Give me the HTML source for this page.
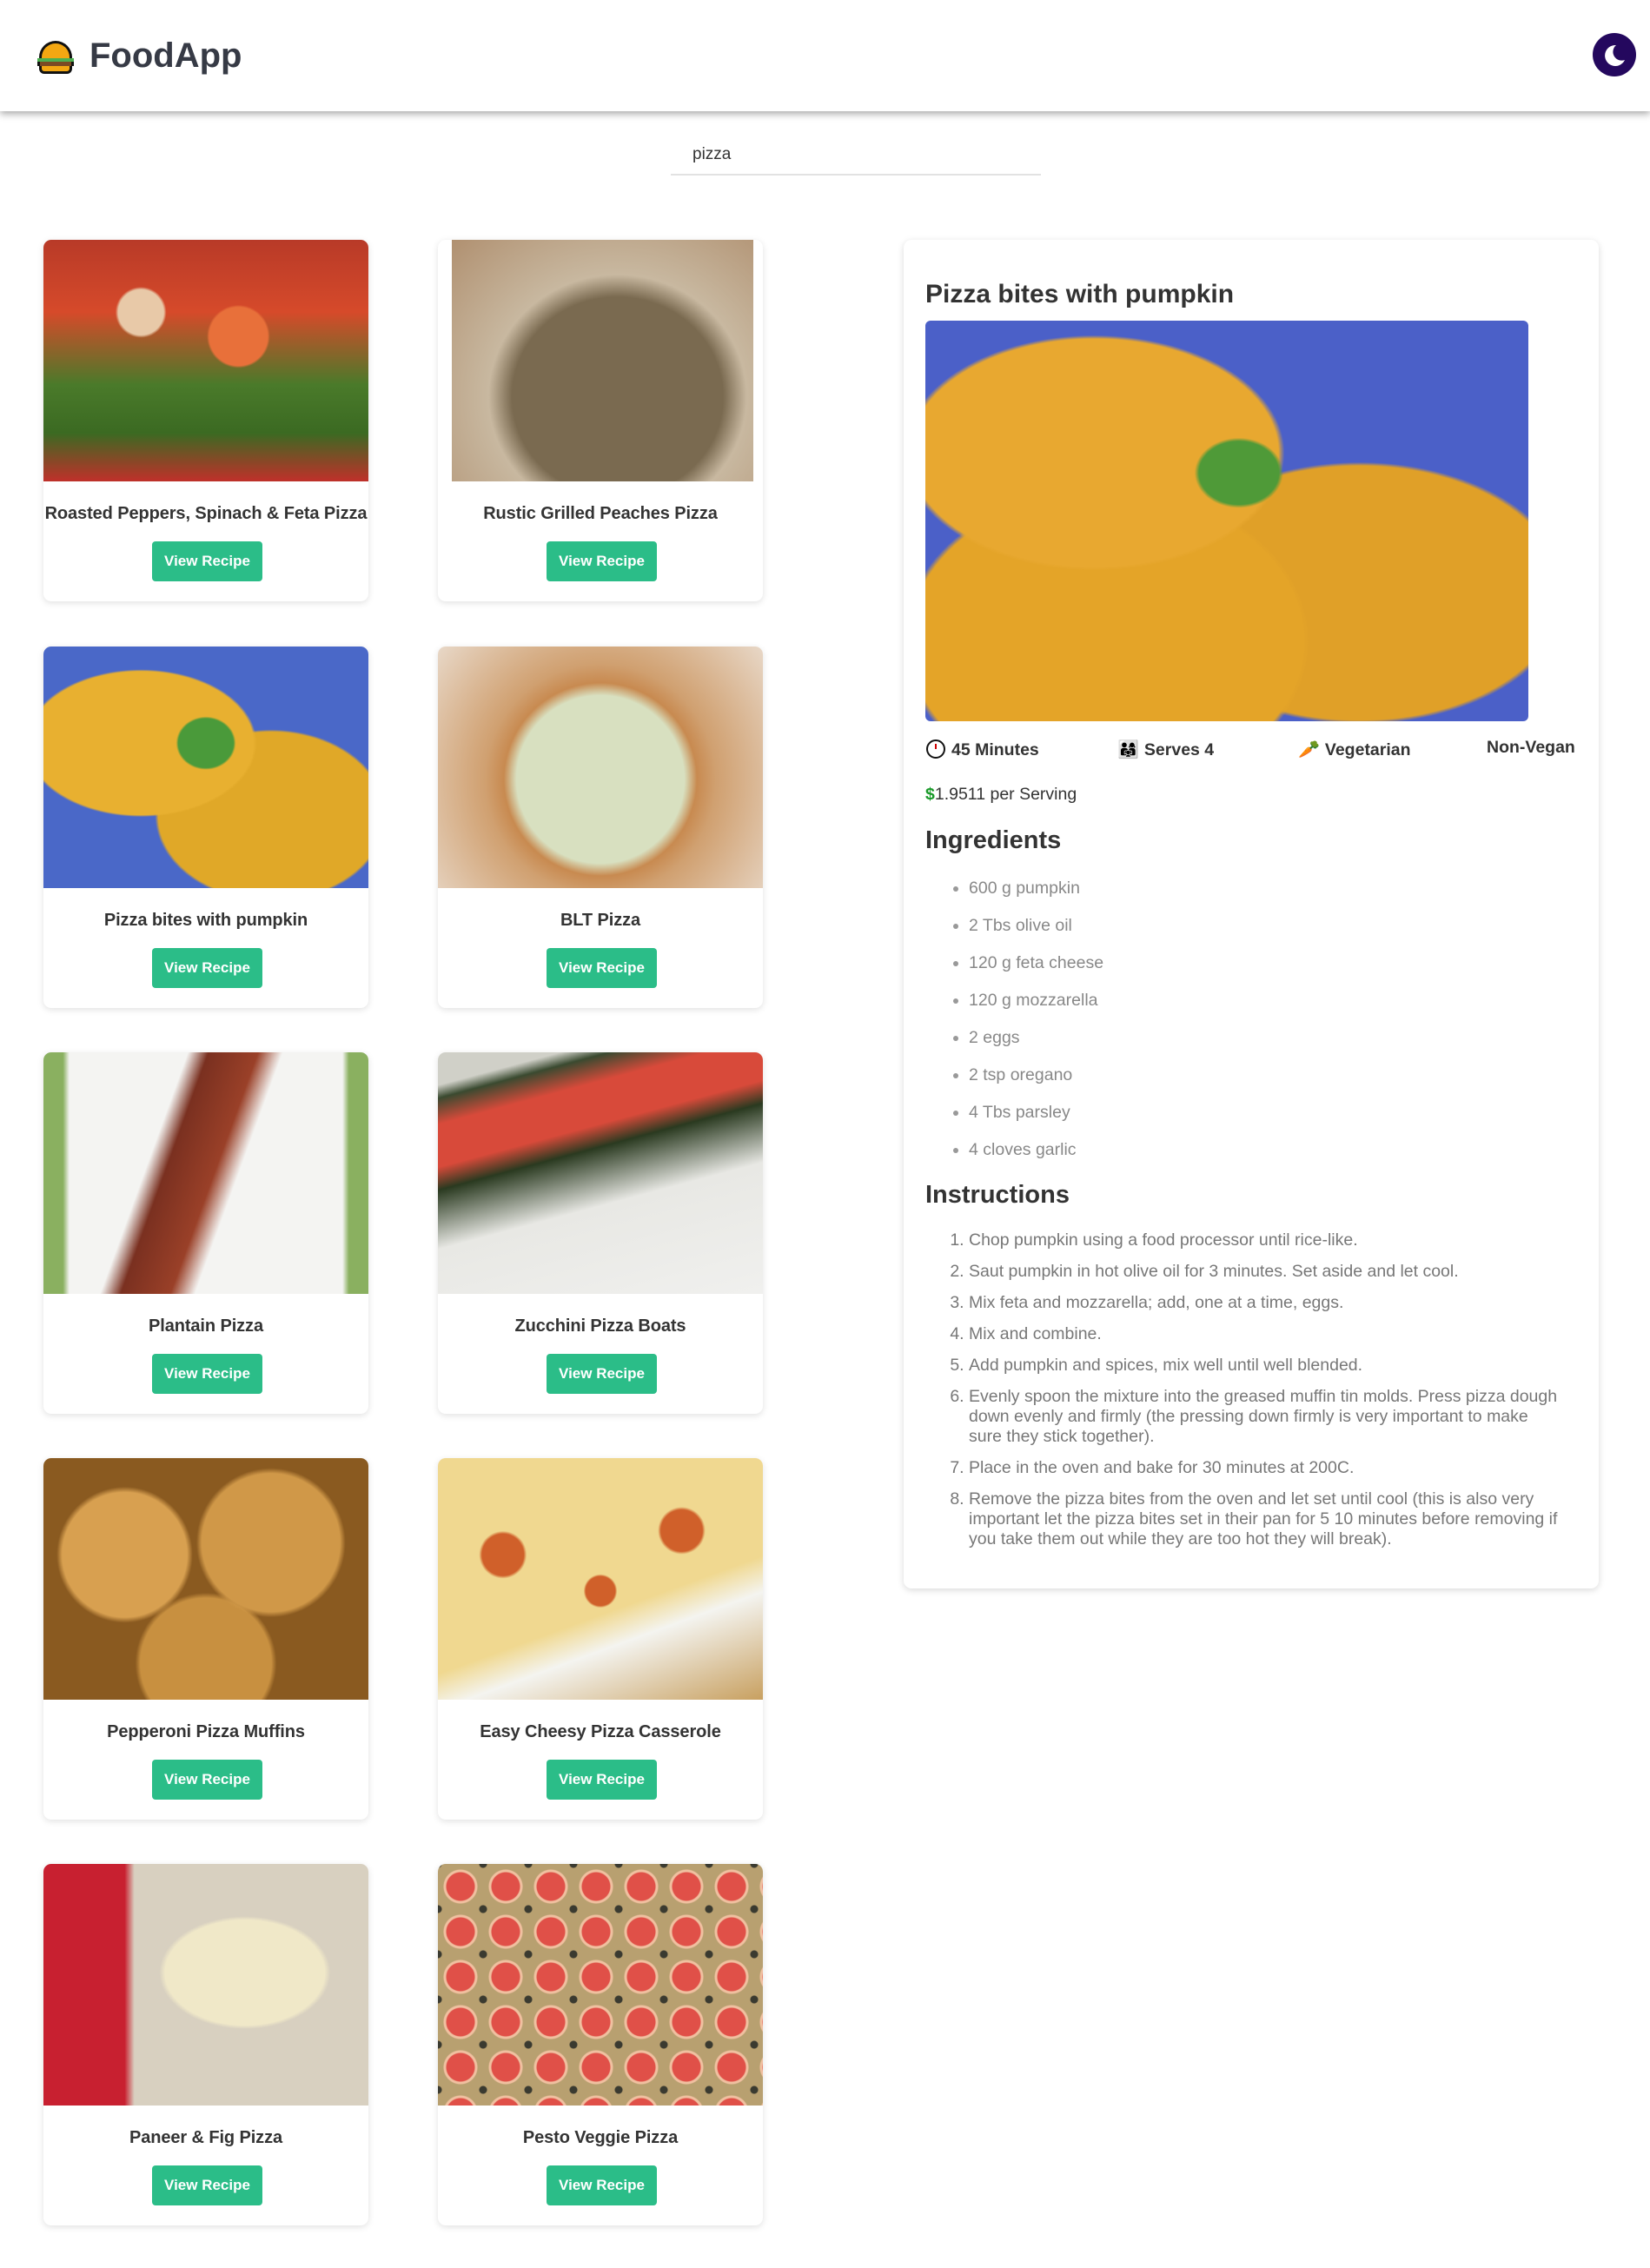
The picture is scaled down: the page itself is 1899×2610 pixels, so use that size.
<!DOCTYPE html>
<html><head><meta charset="utf-8"><style>
*{box-sizing:border-box;margin:0;padding:0}
body{width:1899px;height:2610px;background:#fff;font-family:"Liberation Sans",Arial,sans-serif;position:relative;overflow:hidden;color:#363a45}
.hdr{position:absolute;left:0;top:0;width:1899px;height:128px;background:#fff;box-shadow:0 3px 8px rgba(0,0,0,.35)}
.logo{position:absolute;left:103px;top:42px;font-size:40px;font-weight:bold;color:#363a45}
.moon{position:absolute;left:1833px;top:38px;width:50px;height:50px;border-radius:50%;background:#24085e}
.search{position:absolute;left:772px;top:200px;width:426px;border-top:2px solid #e2e2e2}
.stext{position:absolute;left:797px;top:167px;font-size:19px;color:#333}
.card{position:absolute;width:374px;height:416px;background:#fff;border-radius:9px;box-shadow:0 2px 8px rgba(0,0,0,.12);overflow:hidden}
.card .img{position:absolute;left:0;top:0;width:100%;height:278px}
.card .t{position:absolute;left:0;right:0;top:304px;text-align:center;font-size:20px;font-weight:bold;color:#333;white-space:nowrap;letter-spacing:-0.1px}
.card .b{position:absolute;left:125px;top:347px;width:127px;height:46px;background:#2bbd88;border-radius:4px;color:#fff;font-size:17px;font-weight:bold;text-align:center;line-height:46px}
.panel{position:absolute;left:1040px;top:276px;width:800px;height:1552px;border-radius:9px;box-shadow:0 2px 8px rgba(0,0,0,.15);background:#fff}
.p{position:absolute;white-space:nowrap}
ul.ing{position:absolute;left:1115px;top:1008px;list-style:disc;color:#888;font-size:19.5px}
ul.ing li{height:43px;line-height:28px}
ul.ing li::marker{color:#999}
ol.ins{position:absolute;left:1115px;top:1416px;width:678px;color:#777;font-size:19.5px;line-height:23px;padding-left:0}
ol.ins li{margin-bottom:13px}
</style></head><body>
<div class="hdr">
 <div style="position:absolute;left:43px;top:47px;width:42px;height:38px">
  <div style="position:absolute;left:2px;top:0;width:38px;height:22px;background:#f3a712;border:3px solid #111;border-bottom:none;border-radius:19px 19px 3px 3px"></div>
  <div style="position:absolute;left:0;top:20px;width:42px;height:4px;background:#4caf50"></div>
  <div style="position:absolute;left:0;top:24px;width:42px;height:5px;background:#7a4a24;border-left:3px solid #111;border-right:3px solid #111"></div>
  <div style="position:absolute;left:2px;top:29px;width:38px;height:9px;background:#f3a712;border:3px solid #111;border-top:none;border-radius:0 0 6px 6px"></div>
 </div>
 <div class="logo">FoodApp</div>
 <div class="moon"><svg width="50" height="50" viewBox="0 0 50 50"><path d="M27 14 A12 12 0 1 0 37 31 A10 10 0 0 1 27 14Z" fill="#fff"/></svg></div>
</div>
<div class="stext">pizza</div>
<div class="search"></div>

<div class="card" style="left:50px;top:276px"><div class="img" style="background:radial-gradient(circle at 30% 30%,#e8c9a8 0 8%,transparent 9%),radial-gradient(circle at 60% 40%,#e8703a 0 12%,transparent 13%),linear-gradient(180deg,#b83a28 0%,#d64a2a 30%,#4a7a2a 60%,#3b6a22 80%,#c0302a 100%)"></div><div class="t">Roasted Peppers, Spinach &amp; Feta Pizza</div><div class="b">View Recipe</div></div>
<div class="card" style="left:504px;top:276px"><div class="img" style="left:16px;width:347px;background:radial-gradient(ellipse at 55% 65%,#7a6a50 0 45%,#c8b8a0 55%,#b09070 100%)"></div><div class="t">Rustic Grilled Peaches Pizza</div><div class="b">View Recipe</div></div>

<div class="card" style="left:50px;top:744px"><div class="img" style="background:radial-gradient(ellipse at 50% 40%,#4a9a3a 0 12%,transparent 13%),radial-gradient(ellipse at 30% 40%,#e8b030 0 35%,transparent 36%),radial-gradient(ellipse at 70% 70%,#e0a828 0 35%,transparent 36%),#4a68c8"></div><div class="t">Pizza bites with pumpkin</div><div class="b">View Recipe</div></div>
<div class="card" style="left:504px;top:744px"><div class="img" style="background:radial-gradient(circle at 50% 55%,#d8e0c0 0 40%,#c88a50 46%,#d0a070 55%,#e8d8c8 100%)"></div><div class="t">BLT Pizza</div><div class="b">View Recipe</div></div>

<div class="card" style="left:50px;top:1211px"><div class="img" style="background:linear-gradient(110deg,transparent 35%,#7a3020 40%,#9a4028 52%,transparent 58%),linear-gradient(90deg,#8ab060 0 6%,#f4f4f2 8% 92%,#8ab060 94%)"></div><div class="t">Plantain Pizza</div><div class="b">View Recipe</div></div>
<div class="card" style="left:504px;top:1211px"><div class="img" style="background:linear-gradient(165deg,#d0d0c8 0 10%,#3a4a30 14%,#d84a3a 22% 35%,#2a3a20 42%,#e8e8e4 60%,#f0f0ee 100%)"></div><div class="t">Zucchini Pizza Boats</div><div class="b">View Recipe</div></div>

<div class="card" style="left:50px;top:1678px"><div class="img" style="background:radial-gradient(circle at 25% 40%,#d8a050 0 22%,transparent 24%),radial-gradient(circle at 70% 35%,#d09848 0 25%,transparent 27%),radial-gradient(circle at 50% 85%,#c89040 0 25%,transparent 27%),#8a5a20"></div><div class="t">Pepperoni Pizza Muffins</div><div class="b">View Recipe</div></div>
<div class="card" style="left:504px;top:1678px"><div class="img" style="background:radial-gradient(circle at 20% 40%,#d0602a 0 7%,transparent 8%),radial-gradient(circle at 50% 55%,#d0602a 0 7%,transparent 8%),radial-gradient(circle at 75% 30%,#d0602a 0 7%,transparent 8%),linear-gradient(160deg,#f0d890 0 60%,#f4f4f0 70%,#c8a060 100%)"></div><div class="t">Easy Cheesy Pizza Casserole</div><div class="b">View Recipe</div></div>

<div class="card" style="left:50px;top:2145px"><div class="img" style="background:radial-gradient(ellipse at 62% 45%,#f0e8c8 0 28%,transparent 30%),linear-gradient(90deg,#c82030 0 25%,#d8d0c0 28% 100%)"></div><div class="t">Paneer &amp; Fig Pizza</div><div class="b">View Recipe</div></div>
<div class="card" style="left:504px;top:2145px"><div class="img" style="background:radial-gradient(circle,#e05048 0 16px,#f0c0a0 17px 19px,transparent 20px) 0 0/52px 52px,radial-gradient(circle,#3a3a30 0 4px,transparent 5px) 26px 26px/52px 52px,#b8a070"></div><div class="t">Pesto Veggie Pizza</div><div class="b">View Recipe</div></div>

<div class="panel"></div>
<div class="p" style="left:1065px;top:322px;font-size:30px;font-weight:bold;color:#333">Pizza bites with pumpkin</div>
<div class="p" style="left:1065px;top:369px;width:694px;height:461px;border-radius:6px;background:radial-gradient(ellipse at 52% 38%,#4f9a38 0 9%,transparent 10%),radial-gradient(ellipse at 28% 33%,#e8a830 0 30%,transparent 31%),radial-gradient(ellipse at 30% 80%,#e4a428 0 33%,transparent 34%),radial-gradient(ellipse at 72% 68%,#e0a028 0 33%,transparent 34%),#4b60c8"></div>
<div class="p" style="left:1065px;top:850px;font-size:19.5px;font-weight:bold;color:#333"><svg width="24" height="24" viewBox="0 0 24 24" style="vertical-align:-5px;margin-right:6px"><circle cx="12" cy="12" r="10" fill="#fff" stroke="#111" stroke-width="2"/><path d="M12 6v6" stroke="#c00" stroke-width="2"/></svg>45 Minutes</div>
<div class="p" style="left:1286px;top:850px;font-size:19.5px;font-weight:bold;color:#333"><span style="font-size:20px;margin-right:6px">👨‍👩‍👧</span>Serves 4</div>
<div class="p" style="left:1494px;top:850px;font-size:19.5px;font-weight:bold;color:#333"><span style="font-size:20px;margin-right:6px">🥕</span>Vegetarian</div>
<div class="p" style="left:1711px;top:849px;font-size:19.5px;font-weight:bold;color:#333">Non-Vegan</div>
<div class="p" style="left:1065px;top:903px;font-size:19.5px;color:#333"><span style="color:#1a9a2a;font-weight:bold">$</span>1.9511 per Serving</div>
<div class="p" style="left:1065px;top:951px;font-size:29px;font-weight:bold;color:#333">Ingredients</div>
<ul class="ing"><li>600 g pumpkin</li><li>2 Tbs olive oil</li><li>120 g feta cheese</li><li>120 g mozzarella</li><li>2 eggs</li><li>2 tsp oregano</li><li>4 Tbs parsley</li><li>4 cloves garlic</li></ul>
<div class="p" style="left:1065px;top:1359px;font-size:29px;font-weight:bold;color:#333">Instructions</div>
<ol class="ins">
<li>Chop pumpkin using a food processor until rice-like.</li>
<li>Saut pumpkin in hot olive oil for 3 minutes. Set aside and let cool.</li>
<li>Mix feta and mozzarella; add, one at a time, eggs.</li>
<li>Mix and combine.</li>
<li>Add pumpkin and spices, mix well until well blended.</li>
<li>Evenly spoon the mixture into the greased muffin tin molds. Press pizza dough down evenly and firmly (the pressing down firmly is very important to make sure they stick together).</li>
<li>Place in the oven and bake for 30 minutes at 200C.</li>
<li>Remove the pizza bites from the oven and let set until cool (this is also very important let the pizza bites set in their pan for 5 10 minutes before removing if you take them out while they are too hot they will break).</li>
</ol>
</body></html>
